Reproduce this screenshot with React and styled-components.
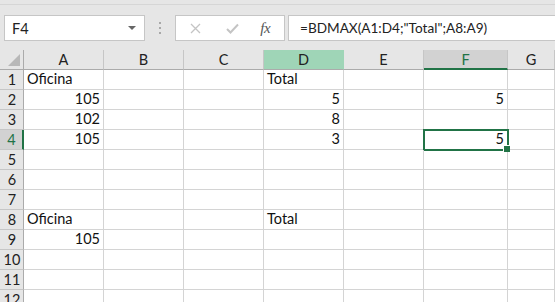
import styled, { createGlobalStyle } from 'styled-components';

const GlobalStyle = createGlobalStyle`
  html, body {
    margin: 0;
    padding: 0;
    background: #ffffff;
  }
  body {
    font-family: 'Lato', 'Open Sans', sans-serif;
    overflow: hidden;
  }
`;

const Page = styled.div`
  width: 555px;
  height: 302px;
  overflow: hidden;
  background: #ffffff;
`;

const Ribbon = styled.div`
  height: 4px;
  background: #e6e6e6;
  border-bottom: 1px solid #d6d6d6;
`;

const Toolbar = styled.div`
  height: 45px;
  box-sizing: border-box;
  background: #e6e6e6;
  display: flex;
  align-items: flex-start;
  padding: 10px 0 0 4px;
`;

const NameBox = styled.div`
  width: 141px;
  height: 26px;
  box-sizing: border-box;
  background: #fff;
  border: 1px solid #c6c6c6;
  display: flex;
  align-items: center;
  justify-content: space-between;
  padding: 0 8px 0 7px;
  font-size: 14.5px;
  color: #222;
`;

const Caret = styled.span`
  width: 0;
  height: 0;
  border-left: 4px solid transparent;
  border-right: 4px solid transparent;
  border-top: 4px solid #666;
`;

const Grip = styled.div`
  width: 30px;
  height: 26px;
  display: flex;
  flex-direction: column;
  align-items: center;
  justify-content: center;
  gap: 3px;

  span {
    width: 2px;
    height: 2px;
    background: #a8a8a8;
  }
`;

const FxBox = styled.div`
  width: 110px;
  height: 26px;
  box-sizing: border-box;
  background: #fff;
  border: 1px solid #c6c6c6;
  display: flex;
  align-items: center;
  padding-left: 14px;
`;

const IconSlot = styled.div`
  width: ${(p) => p.$w}px;
  display: flex;
  align-items: center;
`;

const Fx = styled.span`
  font-family: 'Liberation Serif', serif;
  font-style: italic;
  font-size: 15px;
  color: #555;
  letter-spacing: -0.5px;
`;

const FormulaBox = styled.div`
  flex: 1;
  margin-left: 3px;
  height: 26px;
  box-sizing: border-box;
  background: #fff;
  border: 1px solid #c6c6c6;
  border-right: none;
  display: flex;
  align-items: center;
  padding-left: 11px;
  font-size: 13.6px;
  color: #222;
  white-space: nowrap;
`;

const Sheet = styled.div`
  display: grid;
  grid-template-columns: 24px repeat(5, 80px) 84px 1fr;
  grid-auto-rows: 20px;
`;

const Corner = styled.div`
  position: relative;
  background: #e6e6e6;
  border-right: 1px solid #ababab;
  border-bottom: 1px solid #ababab;
  box-sizing: border-box;

  &::after {
    content: '';
    position: absolute;
    right: 3px;
    bottom: 3px;
    width: 0;
    height: 0;
    border-left: 12px solid transparent;
    border-bottom: 12px solid #b8b8b8;
  }
`;

const ColHead = styled.div`
  box-sizing: border-box;
  background: ${(p) => (p.$hl ? '#9fd5b7' : p.$sel ? '#d2d2d2' : '#e6e6e6')};
  border-right: 1px solid ${(p) => (p.$hl ? '#9fd5b7' : '#c6c6c6')};
  border-bottom: ${(p) => (p.$sel ? '2px solid #217346' : '1px solid #ababab')};
  display: flex;
  align-items: center;
  justify-content: center;
  font-size: 14.5px;
  color: ${(p) => (p.$sel ? '#217346' : '#222')};
  padding-top: ${(p) => (p.$sel ? 1 : 0)}px;
`;

const RowHead = styled.div`
  box-sizing: border-box;
  background: ${(p) => (p.$sel ? '#d2d2d2' : '#e6e6e6')};
  border-right: ${(p) => (p.$sel ? '2px solid #217346' : '1px solid #ababab')};
  border-bottom: 1px solid #c6c6c6;
  display: flex;
  align-items: center;
  justify-content: center;
  font-size: 14.5px;
  color: ${(p) => (p.$sel ? '#217346' : '#222')};
  padding-left: 1px;
`;

const Cell = styled.div`
  position: relative;
  box-sizing: border-box;
  border-right: 1px solid #d4d4d4;
  border-bottom: 1px solid #d4d4d4;
  display: flex;
  align-items: flex-end;
  justify-content: ${(p) => (p.$num ? 'flex-end' : 'flex-start')};
  padding: 0 3px 1px 3px;
  font-size: 14.5px;
  line-height: 18px;
  color: #111;
  white-space: nowrap;
`;

const Selection = styled.div`
  position: absolute;
  left: -1px;
  top: -1px;
  right: -2px;
  bottom: -2px;
  border: 2px solid #217346;
  pointer-events: none;
`;

const FillHandle = styled.div`
  position: absolute;
  right: -3px;
  bottom: -3px;
  width: 6px;
  height: 6px;
  background: #217346;
  border-left: 1px solid #fff;
  border-top: 1px solid #fff;
  z-index: 2;
`;

const cols = ['A', 'B', 'C', 'D', 'E', 'F', 'G'];

const data = {
  1: { A: 'Oficina', D: 'Total' },
  2: { A: 105, D: 5, F: 5 },
  3: { A: 102, D: 8 },
  4: { A: 105, D: 3, F: 5 },
  8: { A: 'Oficina', D: 'Total' },
  9: { A: 105 },
};

function CloseIcon() {
  return (
    <svg width="11" height="11" viewBox="0 0 11 11">
      <path d="M1 1 L10 10 M10 1 L1 10" stroke="#c4c4c4" strokeWidth="1.3" fill="none" />
    </svg>
  );
}

function CheckIcon() {
  return (
    <svg width="13" height="11" viewBox="0 0 13 11">
      <path d="M1 6 L4.5 9.5 L12 1.5" stroke="#c4c4c4" strokeWidth="2" fill="none" />
    </svg>
  );
}

export default function App() {
  const rows = Array.from({ length: 12 }, (_, i) => i + 1);

  return (
    <Page>
      <GlobalStyle />
      <Ribbon />
      <Toolbar>
        <NameBox>
          F4
          <Caret />
        </NameBox>
        <Grip>
          <span />
          <span />
          <span />
        </Grip>
        <FxBox>
          <IconSlot $w={36}>
            <CloseIcon />
          </IconSlot>
          <IconSlot $w={35}>
            <CheckIcon />
          </IconSlot>
          <IconSlot $w={24}>
            <Fx>fx</Fx>
          </IconSlot>
        </FxBox>
        <FormulaBox>=BDMAX(A1:D4;"Total";A8:A9)</FormulaBox>
      </Toolbar>

      <Sheet>
        <Corner />
        {cols.map((c) => (
          <ColHead key={c} $hl={c === 'D'} $sel={c === 'F'}>
            {c}
          </ColHead>
        ))}
        {rows.map((r) => [
          <RowHead key={`h${r}`} $sel={r === 4}>
            {r}
          </RowHead>,
          ...cols.map((c) => {
            const v = data[r] && data[r][c];
            return (
              <Cell key={`${c}${r}`} $num={typeof v === 'number'}>
                {v}
                {r === 4 && c === 'F' && (
                  <Selection>
                    <FillHandle />
                  </Selection>
                )}
              </Cell>
            );
          }),
        ])}
      </Sheet>
    </Page>
  );
}
